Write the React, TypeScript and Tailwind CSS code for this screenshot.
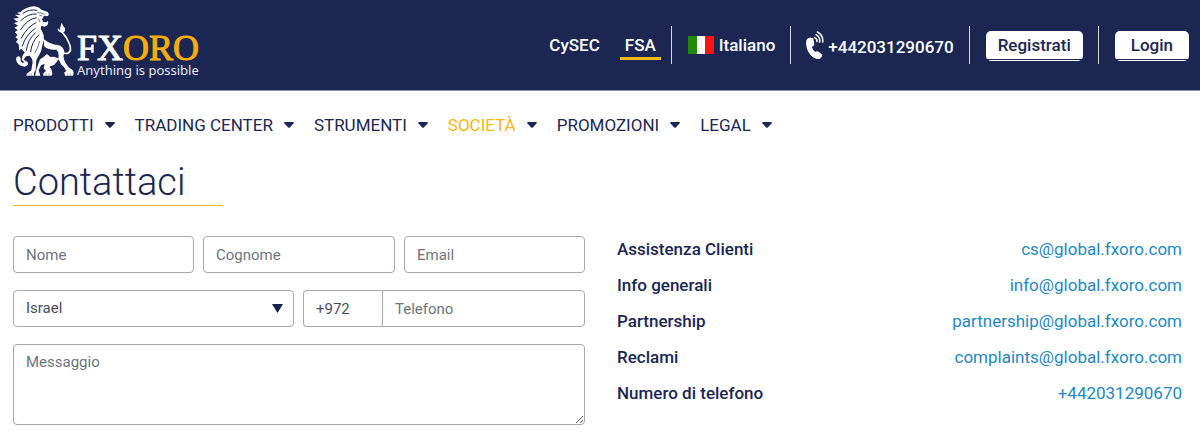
import type { ReactNode } from 'react';

const menu = ['Prodotti', 'Trading Center', 'Strumenti', 'Società', 'Promozioni', 'Legal'];

const contacts = [
  { label: 'Assistenza Clienti', value: 'cs@global.fxoro.com', href: 'mailto:cs@global.fxoro.com' },
  { label: 'Info generali', value: 'info@global.fxoro.com', href: 'mailto:info@global.fxoro.com' },
  { label: 'Partnership', value: 'partnership@global.fxoro.com', href: 'mailto:partnership@global.fxoro.com' },
  { label: 'Reclami', value: 'complaints@global.fxoro.com', href: 'mailto:complaints@global.fxoro.com' },
  { label: 'Numero di telefono', value: '+442031290670', href: 'tel:+442031290670' },
];

const field =
  'h-[37px] w-full min-w-0 rounded border border-[#a9a9ab] bg-white px-3 text-[15px] text-[#495057] placeholder:text-[#6c757d] placeholder:opacity-100';

function Lion() {
  return (
    <svg viewBox="10 12 183 210" className="h-[70px] w-[61px] shrink-0" aria-hidden="true">
      <g fill="#fff">
        {/* mane and head */}
        <path d="M32 31 Q48 14 75 13 Q88 15 97 24 L113 29 Q118 31 117 40 L113 43 L103 41 L100 47 L97 52 L101 60 L110 61 L114 57 L116 61 L113 70 L105 74 L95 71 Q91 79 97 88 Q104 98 103 114 L98 130 Q96 148 88 160 L80 174 L78 205 L73 213 L73 221 L50 221 Q50 213 58 210 L65 205 L69 180 Q68 168 60 161 L51 162 L44 150 L34 140 L29 146 L27 127 L19 120 L25 112 L17 106 L24 99 L15 91 L24 84 L14 77 L25 71 L13 63 L25 59 L11 50 L28 47 L16 38 L34 40 L22 32 Z" />
        {/* raised paw */}
        <path d="M44 152 L54 160 Q44 166 42 173 L54 180 L55 188 L46 194 Q31 193 23 183 Q17 174 20 166 L28 162 L33 169 L33 178 L39 183 L44 181 L36 173 Q36 162 44 152 Z" />
        {/* back and hind legs */}
        <path d="M103 112 Q122 128 145 129 Q160 132 164 149 Q160 160 163 172 Q166 183 180 199 Q191 203 192 213 L190 221 L166 221 L164 211 L170 207 Q166 196 154 187 L147 172 L134 188 L119 194 L126 203 L128 217 L125 221 L101 221 Q99 212 109 207 L102 199 L105 185 L94 190 L87 205 L92 221 L76 221 L80 203 L91 172 Q102 166 112 156 L122 165 L132 164 L146 169 Q150 152 140 143 Q115 145 103 132 Z" />
        {/* tail tuft */}
        <path d="M156 62 Q160 73 166 79 Q168 92 156 92 Q143 89 144 79 L151 85 Q150 79 156 62 Z" />
      </g>
      <path d="M156 89 Q171 105 178 123 Q188 145 176 153 Q167 157 158 151" fill="none" stroke="#fff" strokeWidth="5" />
      <g fill="none" stroke="#1b2752" strokeWidth="3" strokeLinecap="round">
        <path d="M82 25 Q58 20 40 34 M80 36 Q55 34 33 56 M80 47 Q53 51 33 83 M79 62 Q54 73 35 108 M77 79 Q48 99 38 132 M77 93 Q55 110 50 145 M87 99 Q66 119 63 149" />
      </g>
      <g fill="none" stroke="#1b2752" strokeWidth="2" strokeLinecap="round">
        <path d="M84 32 L94 33 L104 37 M90 40 L97 42 M87 51 L91 60 M90 118 Q84 141 76 152" />
        <path d="M58 214 V220 M66 214 V220 M109 214 V220 M118 214 V220 M174 214 V220 M183 214 V220" strokeWidth="1" />
      </g>
    </svg>
  );
}

function PhoneIcon() {
  return (
    <svg viewBox="0 0 54 84" className="h-7 w-[18px] shrink-0" aria-hidden="true">
      <path
        d="M3 24 Q11 17 22 22 L25 41 Q22 47 17 47 Q20 56 28 63 Q32 59 38 62 L49 71 Q48 78 42 83 Q34 87 21 79 Q4 65 1 44 Q-1 31 3 24Z"
        fill="#fff"
      />
      <g fill="none" stroke="#fff" strokeWidth="4.500" strokeLinecap="round">
        <path d="M26 20 Q34 24 33 32" />
        <path d="M30 11 Q43 18 41 33" />
        <path d="M34 3 Q53 13 50 33" />
      </g>
    </svg>
  );
}

function Flag() {
  return (
    <svg viewBox="0 0 26 18" className="h-[18px] w-[26px]" aria-hidden="true">
      <path d="M0 0h9v18H0z" fill="#1f8a0c" />
      <path d="M9 0h8v18H9z" fill="#fff" />
      <path d="M17 0h9v18h-9z" fill="#fb1414" />
    </svg>
  );
}

function Caret() {
  return (
    <svg viewBox="0 0 10 6" className="h-[6px] w-[10px]" fill="#1b2752" aria-hidden="true">
      <path d="M1 0h8q1.500 0.300 0.500 1.500L5.800 5.400q-.8.700-1.600 0L.5 1.500Q-.5.300 1 0z" />
    </svg>
  );
}

function Divider() {
  return <span className="h-[38px] w-px bg-[#d5d8e3]" />;
}

function HeaderButton({ children }: { children: ReactNode }) {
  return (
    <button
      type="button"
      className="flex h-[30px] flex-col justify-between rounded-[5px] bg-white pb-px text-[17px] leading-7 font-medium text-[#1b2752]"
    >
      <span className="px-3">{children}</span>
      <span className="h-px w-full bg-[#1b2752]" />
    </button>
  );
}

export default function App() {
  return (
    <div className="bg-white font-['Roboto',sans-serif] text-[#1b2752]">
      <header className="flex h-[91px] items-center justify-between border-b border-[#8d93a9] bg-[#1b2752] pr-[11px] pl-[13px] text-white">
        <a href="#home" className="flex items-end gap-[3px] pb-2">
          <Lion />
          <span className="flex flex-col">
            <span className="font-['Liberation_Serif',serif] text-[36px] leading-8 [-webkit-text-stroke:1px]">
              FX<span className="text-[#f9ad0c]">ORO</span>
            </span>
            <span className="font-['Noto_Sans',sans-serif] text-[13px] leading-3 text-[#e3e6f1]">
              Anything is possible
            </span>
          </span>
        </a>

        <div className="flex items-center text-[17px] leading-5 font-medium">
          <a href="#cysec" className="mr-5">
            CySEC
          </a>
          <a href="#fsa" className="mr-[10px] border-b-[3px] border-[#f5b71c] px-[5px] pt-[5px]">
            <span className="block pb-[2px]">FSA</span>
          </a>
          <Divider />
          <a href="#lang" className="mr-[15px] ml-4 flex items-center gap-[5px]">
            <Flag />
            Italiano
          </a>
          <Divider />
          <a href="tel:+442031290670" className="mr-[15px] ml-[15px] flex items-center gap-1">
            <PhoneIcon />
            <span className="pt-[3px]">+442031290670</span>
          </a>
          <Divider />
          <div className="mr-[15px] ml-4 pt-px">
            <HeaderButton>Registrati</HeaderButton>
          </div>
          <Divider />
          <div className="ml-4 pt-px">
            <HeaderButton>
              <span className="px-1">Login</span>
            </HeaderButton>
          </div>
        </div>
      </header>

      <nav className="flex gap-5 px-[13px] pt-[22px]">
        {menu.map((item) => (
          <a
            key={item}
            href={`#${item}`}
            className={`flex items-center gap-[11px] text-[17px] leading-6 uppercase ${
              item === 'Società' ? 'text-[#fcb614]' : 'text-[#1b2752]'
            }`}
          >
            {item}
            <Caret />
          </a>
        ))}
      </nav>

      <main className="px-[13px]">
        <h1 className="mt-[23px] w-[210px] border-b border-b-[#edbd26] text-[38px] leading-[45px] font-light">
          Contattaci
        </h1>

        <div className="mt-[30px] flex gap-8 pr-[5px]">
          <form className="flex w-[572px] shrink-0 flex-col gap-[17px]">
            <div className="grid grid-cols-[181fr_192fr_181fr] gap-[9px]">
              <input aria-label="Nome" placeholder="Nome" className={field} />
              <input aria-label="Cognome" placeholder="Cognome" className={field} />
              <input aria-label="Email" type="email" placeholder="Email" className={field} />
            </div>
            <div className="grid grid-cols-[281fr_282fr] gap-[9px]">
              <div className="relative">
                <select aria-label="Paese" className={`${field} appearance-none`}>
                  <option>Israel</option>
                </select>
                <svg
                  viewBox="0 0 10 9"
                  className="pointer-events-none absolute top-[14px] right-[11px] h-[9px] w-[11px]"
                  fill="#14234f"
                  preserveAspectRatio="none"
                  aria-hidden="true"
                >
                  <path d="M0 0h10L5 9z" />
                </svg>
              </div>
              <div className="flex">
                <div className="w-[79px] shrink-0">
                  <input aria-label="Prefisso" defaultValue="+972" className={`${field} rounded-r-none border-r-0`} />
                </div>
                <input aria-label="Telefono" type="tel" placeholder="Telefono" className={`${field} rounded-l-none`} />
              </div>
            </div>
            <textarea
              aria-label="Messaggio"
              placeholder="Messaggio"
              className="block h-[81px] w-full resize rounded border border-[#a9a9ab] px-3 py-[5px] text-[15px] leading-6 text-[#495057] placeholder:text-[#6c757d]"
            />
          </form>

          <dl className="min-w-0 flex-1 text-[17px] leading-[26px]">
            {contacts.map((c) => (
              <div key={c.label} className="flex justify-between pb-[10px]">
                <dt className="font-medium">{c.label}</dt>
                <dd className="text-[#2588c0]">
                  <a href={c.href}>{c.value}</a>
                </dd>
              </div>
            ))}
          </dl>
        </div>
      </main>
    </div>
  );
}
